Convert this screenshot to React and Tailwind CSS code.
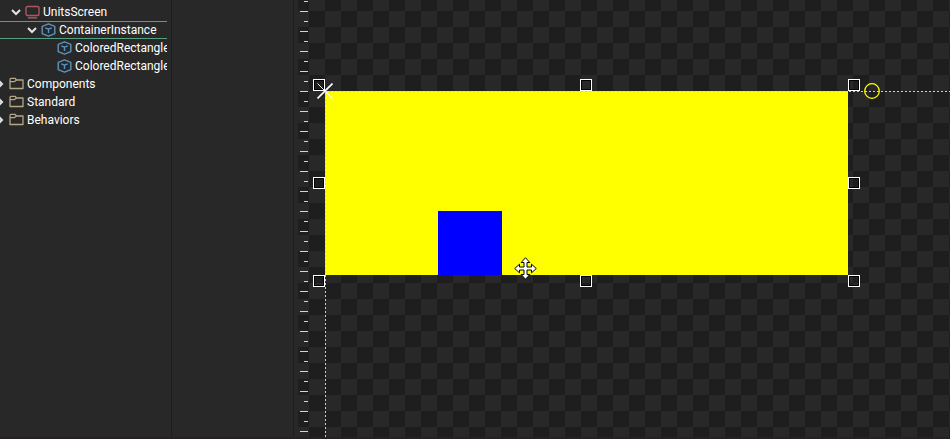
const ROW = "flex h-[18px] items-center whitespace-nowrap border-y";
const TICKS = Array.from({ length: 44 }, (_, i) => i);

function Chevron({ open }) {
  return (
    <svg width="10" height="10" viewBox="0 0 10 10" fill="none" stroke="#e4e4e4" strokeWidth="2" className="shrink-0">
      <path d={open ? "M1 3L5 7L9 3" : "M3 1L7 5L3 9"} />
    </svg>
  );
}

function ScreenIcon() {
  return (
    <svg width="15" height="14" viewBox="0 0 15 14" fill="none" stroke="#b0545f" strokeWidth="1.4" className="shrink-0">
      <rect x="1" y="1.5" width="13" height="9" rx="1.5" />
      <path d="M3 12.8H12" />
    </svg>
  );
}

function CubeIcon() {
  return (
    <svg width="15" height="14" viewBox="0 0 15 14" fill="none" stroke="#5c93bd" strokeWidth="1.4" strokeLinejoin="round" className="shrink-0">
      <path d="M7.5 0.8L13.8 3.3V10.7L7.5 13.2L1.2 10.7V3.3Z" />
      <path d="M4.3 4.8L7.5 6.2L10.7 4.8M7.5 6.2V10" />
    </svg>
  );
}

function FolderIcon() {
  return (
    <svg width="15" height="14" viewBox="0 0 15 14" fill="none" stroke="#b5a684" strokeWidth="1.3" strokeLinejoin="round" className="shrink-0">
      <path d="M1 3V11.5H14V3H7.5L6 1.3H2Q1 1.3 1 3ZM1 4.6H5.5L7.5 3" />
    </svg>
  );
}

function TreeRow({ indent, chevron, icon, label, selected }) {
  return (
    <li className={`${ROW} ${indent} ${selected ? "border-[#55a07e]" : "border-transparent"}`}>
      <button type="button" className="flex items-center whitespace-nowrap">
        {chevron}
        <span className="ml-1 flex items-center gap-[3px]">
          {icon}
          <span>{label}</span>
        </span>
      </button>
    </li>
  );
}

function Tree() {
  return (
    <nav aria-label="Project" className="w-[172px] shrink-0 border-r border-[#1d1d1d] pt-[3px] pr-1">
      <ul className="overflow-hidden">
        <TreeRow indent="pl-[11px]" chevron={<Chevron open />} icon={<ScreenIcon />} label="UnitsScreen" />
        <TreeRow indent="pl-[27px]" chevron={<Chevron open />} icon={<CubeIcon />} label="ContainerInstance" selected />
        <TreeRow indent="pl-[53px]" icon={<CubeIcon />} label="ColoredRectangle" />
        <TreeRow indent="pl-[53px]" icon={<CubeIcon />} label="ColoredRectangle" />
        <TreeRow indent="-ml-[5px]" chevron={<Chevron />} icon={<FolderIcon />} label="Components" />
        <TreeRow indent="-ml-[5px]" chevron={<Chevron />} icon={<FolderIcon />} label="Standard" />
        <TreeRow indent="-ml-[5px]" chevron={<Chevron />} icon={<FolderIcon />} label="Behaviors" />
      </ul>
    </nav>
  );
}

function Handle({ place }) {
  return (
    <span className={`absolute size-3 border border-white ${place}`}>
      <span className="block size-full border border-black" />
    </span>
  );
}

function MoveCursor() {
  return (
    <svg width="23" height="23" viewBox="0 0 23 23" className="absolute left-[189px] top-[166px]">
      <path
        d="M11.5 0.7L15.8 5.5H13V10H17.5V7.2L22.3 11.5L17.5 15.8V13H13V17.5H15.8L11.5 22.3L7.2 17.5H10V13H5.5V15.8L0.7 11.5L5.5 7.2V10H10V5.5H7.2Z"
        fill="white"
        stroke="black"
      />
    </svg>
  );
}

function Ruler() {
  return (
    <div className="absolute left-0 top-0 h-full w-[11px]">
      <svg width="11" height="439" shapeRendering="crispEdges" fill="#d4d4d4">
        {TICKS.map((i) => (
          <rect key={i} x={i % 2 ? 2 : 6} y={1 + i * 10} width={i % 2 ? 8 : 4} height="1" />
        ))}
      </svg>
    </div>
  );
}

function Canvas() {
  return (
    <main className="relative min-w-0 flex-1 overflow-hidden bg-[#1e1e1e]">
      <svg className="absolute inset-0 size-full" shapeRendering="crispEdges">
        <defs>
          <pattern id="checker" x="11" y="11" width="32" height="32" patternUnits="userSpaceOnUse">
            <path d="M16 0H32V16H16ZM0 16H16V32H0Z" fill="#282828" />
          </pattern>
        </defs>
        <rect width="100%" height="100%" fill="url(#checker)" />
      </svg>
      <Ruler />
      <div className="absolute left-[27px] top-[91px] h-[184px] w-[523px] bg-[#ffff00]">
        <div className="absolute bottom-0 left-[113px] size-16 bg-[#0000ff]" />
      </div>
      <svg className="absolute inset-0 size-full" shapeRendering="crispEdges" stroke="#add8e6" strokeDasharray="2 2">
        <path d="M27 91.5H1400M27.5 91V1400" />
      </svg>
      <div className="absolute left-[27px] top-[91px] h-[184px] w-[523px]">
        <Handle place="-left-3 -top-3" />
        <Handle place="left-[255px] -top-3" />
        <Handle place="-right-3 -top-3" />
        <Handle place="-left-3 top-[86px]" />
        <Handle place="-right-3 top-[86px]" />
        <Handle place="-left-3 -bottom-3" />
        <Handle place="left-[255px] -bottom-3" />
        <Handle place="-right-3 -bottom-3" />
        <svg width="16" height="16" className="absolute -left-2 -top-2" stroke="white">
          <path d="M0.5 15.5L15.5 0.5" strokeWidth="1.6" />
          <path d="M0.5 0.5L15.5 15.5" strokeWidth="0.9" />
        </svg>
        <svg width="16" height="16" className="absolute left-[539px] -top-2" fill="none" stroke="#ffff00" strokeWidth="1.3">
          <circle cx="8" cy="8" r="7.3" />
        </svg>
        <MoveCursor />
      </div>
    </main>
  );
}

export default function App() {
  return (
    <div className="flex h-screen flex-col overflow-hidden bg-[#282828] font-[Roboto,'Liberation_Sans',sans-serif] text-[12px] leading-4 text-white">
      <div className="flex min-h-0 flex-1">
        <Tree />
        <aside className="w-[122px] shrink-0 border-r border-[#1d1d1d]" />
        <div className="w-1 shrink-0" />
        <Canvas />
      </div>
      <div className="h-[2px] shrink-0 bg-[#282022]" />
    </div>
  );
}
